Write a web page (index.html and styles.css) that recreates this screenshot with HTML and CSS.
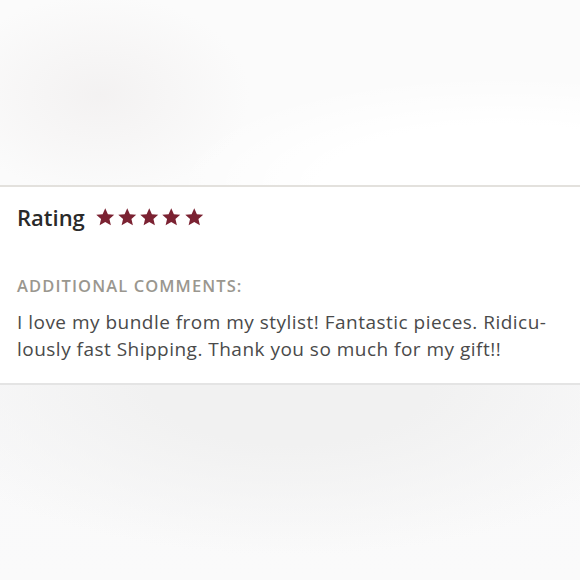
FILE: index.html
```html
<!DOCTYPE html>
<html>
<head>
<meta charset="utf-8">
<link rel="stylesheet" href="styles.css">
</head>
<body>
<div class="page">
  <div class="top"></div>
  <section class="card">
    <div class="rating-row">
      <h2 class="rating-label">Rating</h2>
      <div class="stars">
        <svg class="star" viewBox="0 0 24 24"><path d="M12 1.5l3.1 6.9 7.4.7-5.6 5 1.7 7.4L12 17.6l-6.6 3.9 1.7-7.4-5.6-5 7.4-.7z"/></svg>
        <svg class="star" viewBox="0 0 24 24"><path d="M12 1.5l3.1 6.9 7.4.7-5.6 5 1.7 7.4L12 17.6l-6.6 3.9 1.7-7.4-5.6-5 7.4-.7z"/></svg>
        <svg class="star" viewBox="0 0 24 24"><path d="M12 1.5l3.1 6.9 7.4.7-5.6 5 1.7 7.4L12 17.6l-6.6 3.9 1.7-7.4-5.6-5 7.4-.7z"/></svg>
        <svg class="star" viewBox="0 0 24 24"><path d="M12 1.5l3.1 6.9 7.4.7-5.6 5 1.7 7.4L12 17.6l-6.6 3.9 1.7-7.4-5.6-5 7.4-.7z"/></svg>
        <svg class="star" viewBox="0 0 24 24"><path d="M12 1.5l3.1 6.9 7.4.7-5.6 5 1.7 7.4L12 17.6l-6.6 3.9 1.7-7.4-5.6-5 7.4-.7z"/></svg>
      </div>
    </div>
    <h3 class="comments-label">ADDITIONAL COMMENTS:</h3>
    <p class="comment">I love my bundle from my stylist! Fantastic pieces. Ridicu-<br>lously fast Shipping. Thank you so much for my gift!!</p>
  </section>
  <div class="bottom"></div>
</div>
</body>
</html>
```

FILE: styles.css
```css
html, body {
  margin: 0;
  padding: 0;
  background: #fafafa;
}
.page {
  width: 580px;
  height: 580px;
  display: flex;
  flex-direction: column;
  overflow: hidden;
  font-family: "Open Sans", "Lato", sans-serif;
}
.top {
  height: 185px;
  flex: none;
  background:
    radial-gradient(ellipse 150px 100px at 100px 95px, rgba(242,240,240,0.85), rgba(242,240,240,0) 100%),
    radial-gradient(ellipse 330px 110px at 500px 185px, #ffffff 55%, rgba(255,255,255,0) 100%),
    #fbfbfb;
}
.card {
  flex: none;
  background: #ffffff;
  border-top: 2px solid #e3e1dd;
  border-bottom: 2px solid #e4e4e4;
  padding: 0 17px;
  height: 196px;
}
.rating-row {
  display: flex;
  align-items: center;
  gap: 10px;
  margin-top: 15px;
  height: 30px;
}
.rating-label {
  margin: 0;
  font-size: 22px;
  font-weight: 600;
  color: #2a2a2a;
  letter-spacing: 0;
}
.stars {
  display: flex;
  gap: 1.7px;
  padding-top: 1px;
}
.star {
  width: 20.5px;
  height: 20.5px;
  fill: #7b2232;
}
.comments-label {
  margin: 44px 0 0;
  font-size: 16.5px;
  font-weight: 600;
  color: #9a978f;
  letter-spacing: 1.1px;
  line-height: 20px;
}
.comment {
  margin: 13px 0 0;
  font-size: 19px;
  line-height: 27px;
  color: #4a4a4a;
  letter-spacing: 0.48px;
}
.bottom {
  flex: 1;
  background:
    radial-gradient(ellipse 400px 170px at 290px 0px, rgba(241,241,241,1) 35%, rgba(241,241,241,0) 100%),
    linear-gradient(#f9f9fa, #fafafa);
}
```
